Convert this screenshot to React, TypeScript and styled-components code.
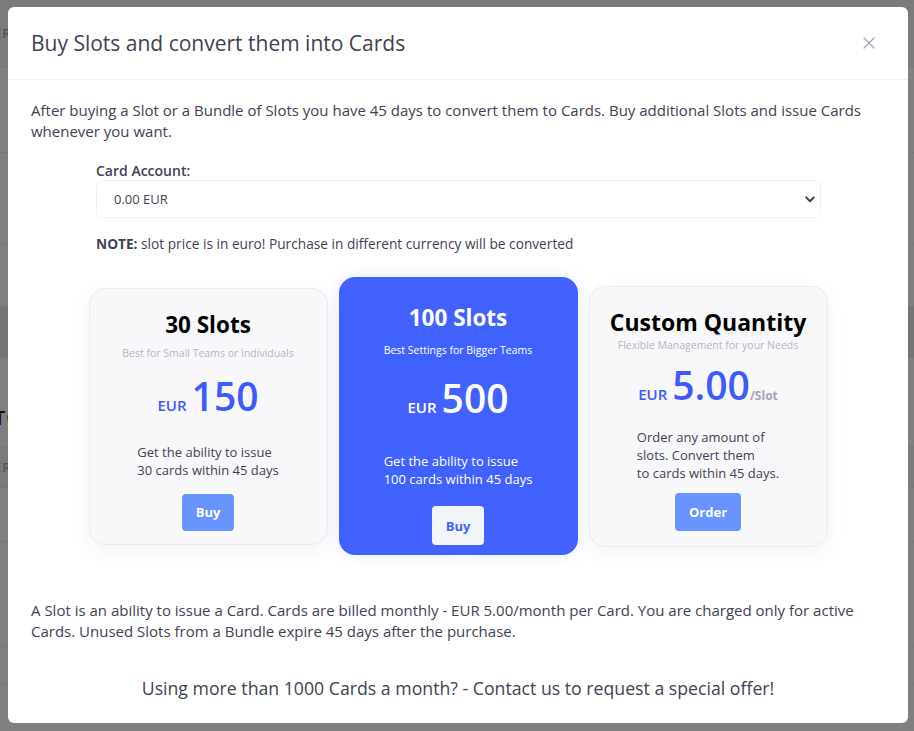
import React from "react";
import styled, { createGlobalStyle, css } from "styled-components";

const GlobalStyle = createGlobalStyle`
  html, body {
    margin: 0;
    padding: 0;
  }
  body {
    font-family: "Open Sans", "Liberation Sans", sans-serif;
    color: #3f4254;
  }
  * {
    box-sizing: border-box;
  }
`;

interface IPlan {
  title: string;
  subtitle: string;
  price: string;
  unit?: string;
  lines: string[];
  action: string;
  featured?: boolean;
  space: {
    top: number;
    title: number;
    sub: number;
    price: number;
    desc: number;
    bottom: number;
    btnW: number;
    btnH: number;
    titleSize: number;
  };
}

const plans: IPlan[] = [
  {
    title: "30 Slots",
    subtitle: "Best for Small Teams or Individuals",
    price: "150",
    lines: ["Get the ability to issue", "30 cards within 45 days"],
    action: "Buy",
    space: { top: 20, title: 5, sub: 13, price: 25, desc: 15, bottom: 13, btnW: 52, btnH: 37, titleSize: 22.5 },
  },
  {
    title: "100 Slots",
    subtitle: "Best Settings for Bigger Teams",
    price: "500",
    lines: ["Get the ability to issue", "100 cards within 45 days"],
    action: "Buy",
    featured: true,
    space: { top: 25, title: 9, sub: 18, price: 32, desc: 18, bottom: 10, btnW: 52, btnH: 39, titleSize: 22.5 },
  },
  {
    title: "Custom Quantity",
    subtitle: "Flexible Management for your Needs",
    price: "5.00",
    unit: "/Slot",
    lines: ["Order any amount of", "slots. Convert them", "to cards within 45 days."],
    action: "Order",
    space: { top: 19, title: 0, sub: 10, price: 21, desc: 11, bottom: 15, btnW: 66, btnH: 38, titleSize: 23 },
  },
];

// rows of the page that sits behind the dialog
const pageRows = [
  { h: 67, label: "ER", tone: "head" },
  { h: 86 },
  { h: 91 },
  { h: 63 },
  { h: 51, tone: "band" },
  { h: 89, label: "TO", tone: "title" },
  { h: 41, label: "ER", tone: "head" },
  { h: 54 },
  { h: 105 },
  { h: 37 },
  { h: 60, amount: "0.00" },
];

export default function App() {
  return (
    <>
      <GlobalStyle />
      <Screen>
        <BackPage>
          {pageRows.map((row, i) => (
            <BackRow key={i} $h={row.h} $tone={row.tone}>
              {row.label && <BackLabel $tone={row.tone}>{row.label}</BackLabel>}
              {row.amount && <BackAmount>{row.amount}</BackAmount>}
            </BackRow>
          ))}
        </BackPage>
        <Backdrop />
        <Modal>
          <ModalHeader>
            <ModalTitle>Buy Slots and convert them into Cards</ModalTitle>
            <CloseButton aria-label="close">
              <svg width="12" height="12" viewBox="0 0 12 12">
                <path d="M1 1L11 11M11 1L1 11" stroke="#a1a5b7" strokeWidth="1.3" strokeLinecap="round" />
              </svg>
            </CloseButton>
          </ModalHeader>
          <ModalBody>
            <Text>
              After buying a Slot or a Bundle of Slots you have 45 days to convert them to Cards. Buy additional Slots
              and issue Cards whenever you want.
            </Text>
            <FormBlock>
              <Label>Card Account:</Label>
              <SelectWrap>
                <Select defaultValue="0">
                  <option value="0">0.00 EUR</option>
                </Select>
                <Chevron width="10" height="7" viewBox="0 0 10 7">
                  <path d="M1.2 1.4L5 5.2L8.8 1.4" stroke="#3f4254" strokeWidth="2" fill="none" strokeLinecap="round" strokeLinejoin="round" />
                </Chevron>
              </SelectWrap>
              <Note>
                <b>NOTE:</b> slot price is in euro! Purchase in different currency will be converted
              </Note>
            </FormBlock>
            <Plans>
              {plans.map((p) => (
                <PlanCard key={p.title} $featured={p.featured} $top={p.space.top} $bottom={p.space.bottom}>
                  <PlanTitle $featured={p.featured} $size={p.space.titleSize} $mb={p.space.title}>
                    {p.title}
                  </PlanTitle>
                  <PlanSub $featured={p.featured} $mb={p.space.sub}>
                    {p.subtitle}
                  </PlanSub>
                  <Price $featured={p.featured} $mb={p.space.price}>
                    <Currency>EUR</Currency>
                    <Amount>{p.price}</Amount>
                    {p.unit && <Unit>{p.unit}</Unit>}
                  </Price>
                  <PlanDesc $featured={p.featured} $mb={p.space.desc}>
                    {p.lines.map((l, i) => (
                      <React.Fragment key={i}>
                        {l}
                        {i < p.lines.length - 1 && <br />}
                      </React.Fragment>
                    ))}
                  </PlanDesc>
                  <PlanButton $featured={p.featured} $w={p.space.btnW} $h={p.space.btnH}>
                    {p.action}
                  </PlanButton>
                </PlanCard>
              ))}
            </Plans>
            <FootText>
              A Slot is an ability to issue a Card. Cards are billed monthly - EUR 5.00/month per Card. You are charged
              only for active Cards. Unused Slots from a Bundle expire 45 days after the purchase.
            </FootText>
            <Offer>Using more than 1000 Cards a month? - Contact us to request a special offer!</Offer>
          </ModalBody>
        </Modal>
      </Screen>
    </>
  );
}

const Screen = styled.div`
  position: relative;
  width: 914px;
  height: 731px;
  overflow: hidden;
`;

const BackPage = styled.div`
  display: flex;
  flex-direction: column;
  background: #ffffff;
  height: 100%;
`;

const BackRow = styled.div<{ $h: number; $tone?: string }>`
  height: ${({ $h }) => $h}px;
  flex-shrink: 0;
  display: flex;
  align-items: center;
  border-bottom: 1px solid #ebedf3;
  ${({ $tone }) =>
    $tone === "band" &&
    css`
      background: #e9eaef;
    `}
  ${({ $tone }) =>
    $tone === "head" &&
    css`
      background: #f5f6fa;
    `}
`;

const BackLabel = styled.span<{ $tone?: string }>`
  margin-left: -6px;
  font-size: 13px;
  font-weight: 600;
  letter-spacing: 1px;
  color: ${({ $tone }) => ($tone === "title" ? "#181c32" : "#a1a5b7")};
  ${({ $tone }) =>
    $tone === "title" &&
    css`
      font-size: 20px;
      margin-top: 30px;
    `}
`;

const BackAmount = styled.span`
  margin-left: 338px;
  margin-top: 46px;
  font-size: 15px;
  color: #181c32;
`;

const Backdrop = styled.div`
  position: absolute;
  inset: 0;
  background: rgba(0, 0, 0, 0.5);
`;

const Modal = styled.div`
  position: absolute;
  top: 7px;
  left: 8px;
  width: 900px;
  height: 716px;
  background: #ffffff;
  border-radius: 6px;
  overflow: hidden;
`;

const ModalHeader = styled.div`
  height: 73px;
  display: flex;
  align-items: center;
  justify-content: space-between;
  padding: 0 33px 0 23px;
  border-bottom: 1px solid #eff2f5;
`;

const ModalTitle = styled.h2`
  margin: 0;
  font-size: 21px;
  font-weight: 500;
  color: #3f4254;
`;

const CloseButton = styled.button`
  display: flex;
  padding: 0;
  border: none;
  background: none;
  cursor: pointer;
`;

const ModalBody = styled.div`
  padding: 20px 23px 23px;
`;

const Text = styled.p`
  margin: 0;
  font-size: 15px;
  line-height: 21px;
  color: #3f4254;
`;

const FormBlock = styled.div`
  margin: 19px 64px 0 65px;
`;

const Label = styled.label`
  display: block;
  font-size: 14px;
  line-height: 19px;
  font-weight: 600;
  color: #3f4254;
`;

const SelectWrap = styled.div`
  position: relative;
`;

const Select = styled.select`
  width: 100%;
  height: 38px;
  appearance: none;
  border: 1px solid #eff2f5;
  border-radius: 6px;
  background: #ffffff;
  padding: 0 17px;
  font-family: inherit;
  font-size: 13px;
  color: #3f4254;
  outline: none;
`;

const Chevron = styled.svg`
  position: absolute;
  right: 6px;
  top: 16px;
  pointer-events: none;
`;

const Note = styled.p`
  margin: 16px 0 0;
  font-size: 13.7px;
  line-height: 20px;
  color: #3f4254;
  b {
    font-weight: 700;
  }
`;

const Plans = styled.div`
  margin-top: 23px;
  display: flex;
  justify-content: center;
  align-items: center;
  gap: 11px;
`;

const PlanCard = styled.div<{ $featured?: boolean; $top: number; $bottom: number }>`
  width: 239px;
  display: flex;
  flex-direction: column;
  align-items: center;
  text-align: center;
  border-radius: 16px;
  padding: ${({ $top, $bottom }) => `${$top}px 10px ${$bottom}px`};
  ${({ $featured }) =>
    $featured
      ? css`
          background: #4262ff;
          box-shadow: 0 0 16px rgba(66, 98, 255, 0.12);
        `
      : css`
          background: #f8f8fa;
          border: 1px solid #ebebf1;
          box-shadow: 0 6px 20px rgba(0, 0, 0, 0.05);
        `}
`;

const PlanTitle = styled.h3<{ $featured?: boolean; $size: number; $mb: number }>`
  margin: 0 0 ${({ $mb }) => $mb}px;
  font-size: ${({ $size }) => $size}px;
  line-height: ${({ $size }) => Math.round($size) + 9}px;
  font-weight: 700;
  color: ${({ $featured }) => ($featured ? "#ffffff" : "#000000")};
`;

const PlanSub = styled.div<{ $featured?: boolean; $mb: number }>`
  margin-bottom: ${({ $mb }) => $mb}px;
  font-size: 10.5px;
  line-height: 15px;
  color: ${({ $featured }) => ($featured ? "#ffffff" : "#b5b5c3")};
`;

const Price = styled.div<{ $featured?: boolean; $mb: number }>`
  height: 44px;
  margin-bottom: ${({ $mb }) => $mb}px;
  display: flex;
  align-items: baseline;
  justify-content: center;
  gap: 5px;
  color: ${({ $featured }) => ($featured ? "#ffffff" : "#3d5afe")};
`;

const Currency = styled.span`
  font-size: 15px;
  font-weight: 600;
`;

const Amount = styled.span`
  font-size: 39px;
  line-height: 44px;
  font-weight: 600;
`;

const Unit = styled.span`
  margin-left: -5px;
  font-size: 12px;
  font-weight: 700;
  color: #a1a5b7;
`;

const PlanDesc = styled.div<{ $featured?: boolean; $mb: number }>`
  margin-bottom: ${({ $mb }) => $mb}px;
  font-size: 13px;
  line-height: 18px;
  text-align: left;
  ${({ $featured }) =>
    $featured
      ? css`
          color: #ffffff;
          font-weight: 500;
        `
      : css`
          color: #3f4254;
        `}
`;

const PlanButton = styled.button<{ $featured?: boolean; $w: number; $h: number }>`
  width: ${({ $w }) => $w}px;
  height: ${({ $h }) => $h}px;
  border: none;
  border-radius: 4px;
  font-family: inherit;
  font-size: 13px;
  font-weight: 700;
  cursor: pointer;
  ${({ $featured }) =>
    $featured
      ? css`
          background: #f1f4f9;
          color: #4262ff;
        `
      : css`
          background: #6993ff;
          color: #ffffff;
        `}
`;

const FootText = styled(Text)`
  margin-top: 45px;
`;

const Offer = styled.p`
  margin: 34px 0 0;
  text-align: center;
  font-size: 17.7px;
  line-height: 24px;
  font-weight: 500;
  color: #3f4254;
`;
